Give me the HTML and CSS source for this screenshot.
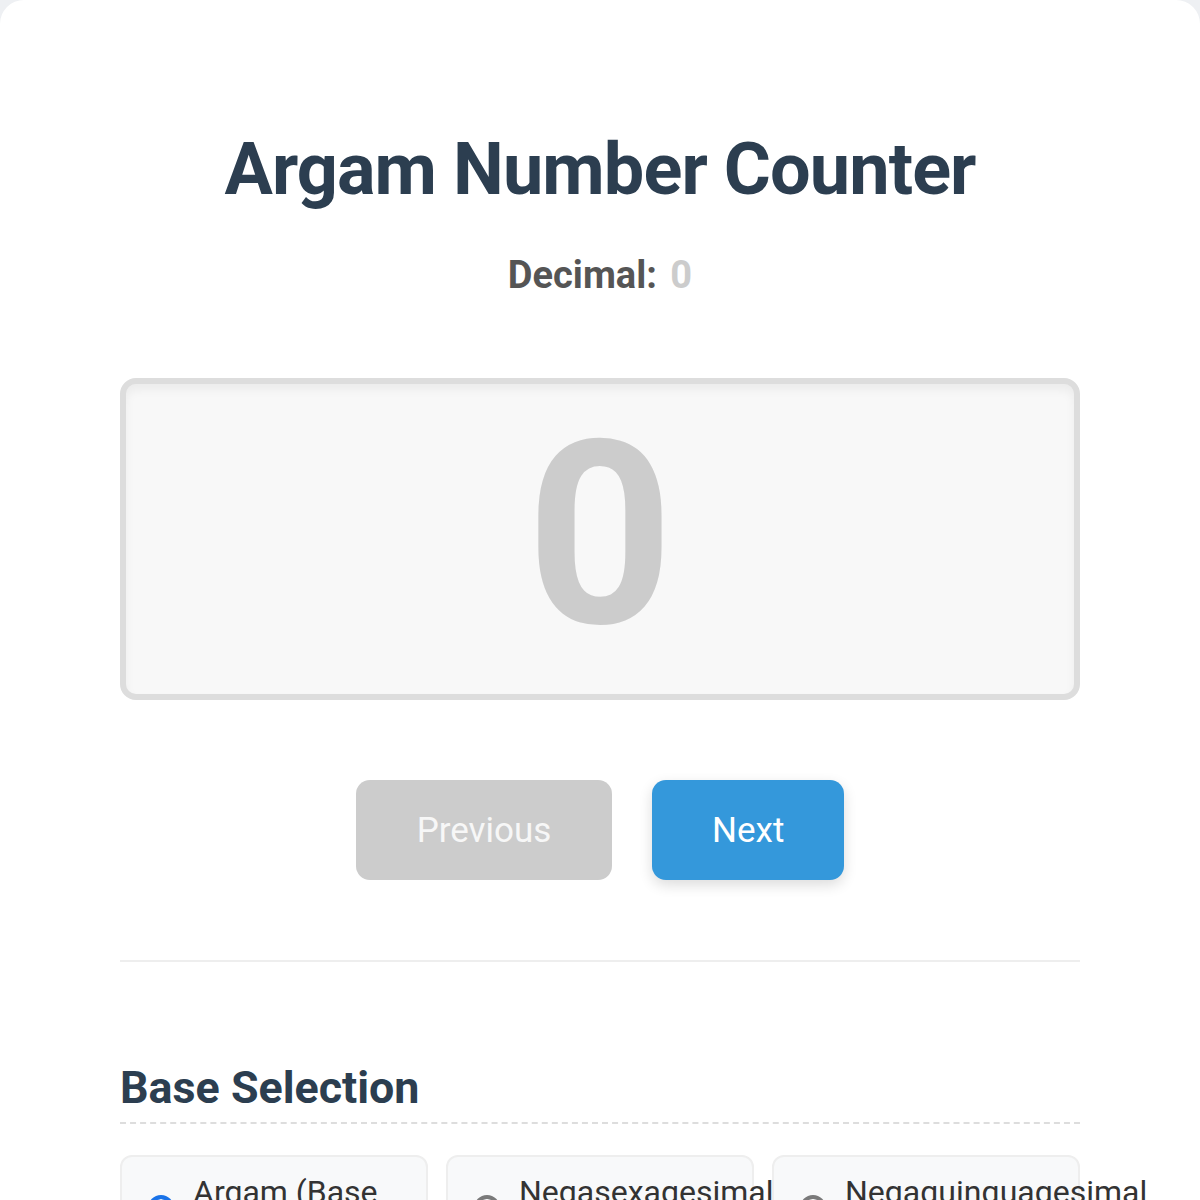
FILE: index.html
```html
<!DOCTYPE html>
<html lang="en">
<head>
<meta charset="utf-8">
<title>Argam Number Counter</title>
<link rel="stylesheet" href="styles.css">
</head>
<body>
<main class="card">
  <h1 class="title">Argam Number Counter</h1>
  <p class="decimal">Decimal: <span class="decimal-value">0</span></p>
  <div class="display"><span class="display-digit">0</span></div>
  <div class="controls">
    <button class="btn btn-prev" disabled>Previous</button>
    <button class="btn btn-next">Next</button>
  </div>
  <hr class="divider">
  <section class="bases">
    <h2 class="section-title">Base Selection</h2>
    <div class="base-grid">
      <label class="base-option">
        <input type="radio" name="base" class="base-radio" checked>
        <span class="base-label">Argam (Base 60)</span>
      </label>
      <label class="base-option">
        <input type="radio" name="base" class="base-radio">
        <span class="base-label">Negasexagesimal (Base -60)</span>
      </label>
      <label class="base-option">
        <input type="radio" name="base" class="base-radio">
        <span class="base-label">Negaquinquagesimal (Base -50)</span>
      </label>
    </div>
  </section>
</main>
</body>
</html>
```
FILE: styles.css
```css
html, body {
  margin: 0;
  padding: 0;
}
body {
  background: #eef0f3;
  font-family: Roboto, "Liberation Sans", Arial, sans-serif;
  color: #333;
}
.card {
  background: #ffffff;
  border-radius: 24px;
  padding: 127px 120px 80px;
  min-height: 1200px;
  box-sizing: border-box;
}
.title {
  margin: 0;
  text-align: center;
  font-size: 72px;
  font-weight: 700;
  line-height: normal;
  letter-spacing: -0.9px;
  color: #2c3e50;
}
.decimal {
  margin: 41px 0 0;
  text-align: center;
  font-size: 38px;
  font-weight: 700;
  line-height: normal;
  color: #555555;
}
.decimal-value {
  color: #cccccc;
  margin-left: 4px;
}
.display {
  margin-top: 81px;
  height: 322px;
  box-sizing: border-box;
  border: 6px solid #dddddd;
  border-radius: 16px;
  background: #f8f8f8;
  box-shadow: inset 0 6px 10px rgba(0, 0, 0, 0.05);
  display: flex;
  align-items: center;
  justify-content: center;
}
.display-digit {
  font-size: 256px;
  font-weight: 700;
  line-height: 1;
  color: #cccccc;
  position: relative;
  top: -3px;
}
.controls {
  margin-top: 80px;
  display: flex;
  justify-content: center;
  gap: 40px;
}
.btn {
  height: 100px;
  padding: 0 60px;
  border: none;
  border-radius: 14px;
  font-family: inherit;
  font-size: 35px;
  color: #ffffff;
  cursor: pointer;
}
.btn-prev {
  background: #cccccc;
  color: #f7f7f7;
  width: 256px;
}
.btn-next {
  background: #3498db;
  width: 192px;
  box-shadow: 0 5px 14px rgba(0, 0, 0, 0.14);
}
.divider {
  margin: 80px 0 0;
  border: none;
  border-top: 2px solid #eeeeee;
  height: 0;
}
.bases {
  margin-top: 99px;
}
.section-title {
  margin: 0;
  font-size: 44.8px;
  font-weight: 700;
  line-height: normal;
  color: #2c3e50;
  padding-bottom: 8px;
  border-bottom: 2px dashed #dddddd;
}
.base-grid {
  margin-top: 31px;
  display: grid;
  grid-template-columns: repeat(3, 1fr);
  gap: 18px;
}
.base-option {
  display: flex;
  align-items: center;
  gap: 19px;
  padding: 16px 26px;
  background: #f8f9fa;
  border: 2px solid #eeeeee;
  border-radius: 12px;
  min-width: 0;
}
.base-radio {
  -webkit-appearance: none;
  appearance: none;
  flex: none;
  box-sizing: border-box;
  width: 26px;
  height: 26px;
  margin: 0 0 6px;
  border-radius: 50%;
  border: 4px solid #7a7a7a;
  background: #ffffff;
}
.base-radio:checked {
  border-color: #1a73e8;
  background: #1a73e8;
  box-shadow: inset 0 0 0 3px #ffffff;
}
.base-label {
  font-size: 32px;
  line-height: 1.2;
  color: #333333;
  min-width: 0;
}
```
